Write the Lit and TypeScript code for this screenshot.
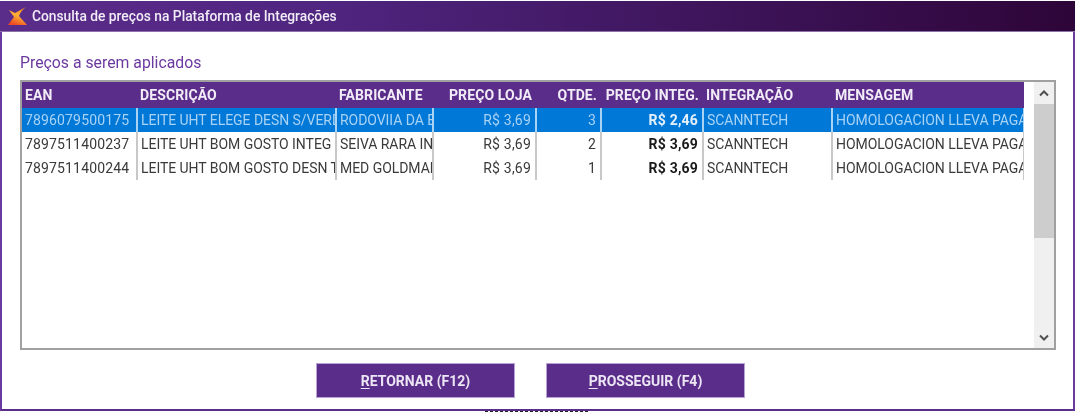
import { LitElement, css, html } from "lit";
import { customElement } from "lit/decorators.js";

const rows = [
  {
    ean: "7896079500175",
    desc: "LEITE UHT ELEGE DESN S/VERDE",
    fab: "RODOVIIA DA BR",
    loja: "R$ 3,69",
    qtd: "3",
    integ: "R$ 2,46",
    selected: true,
  },
  {
    ean: "7897511400237",
    desc: "LEITE UHT BOM GOSTO INTEG SEM",
    fab: "SEIVA RARA IND",
    loja: "R$ 3,69",
    qtd: "2",
    integ: "R$ 3,69",
    selected: false,
  },
  {
    ean: "7897511400244",
    desc: "LEITE UHT BOM GOSTO DESN TP",
    fab: "MED GOLDMAN",
    loja: "R$ 3,69",
    qtd: "1",
    integ: "R$ 3,69",
    selected: false,
  },
];

@customElement("app-root")
export class AppRoot extends LitElement {
  static styles = css`
    :host {
      display: block;
      width: 1076px;
      height: 414px;
      background: #fff;
      font-family: "Roboto", "Liberation Sans", sans-serif;
      overflow: hidden;
    }

    .window {
      box-sizing: border-box;
      width: 1075px;
      height: 410px;
      margin-top: 1px;
      border-left: 2px solid #6b3aa0;
      border-right: 2px solid #6b3aa0;
      border-bottom: 2px solid #5b2d8a;
      display: flex;
      flex-direction: column;
      filter: blur(0.35px);
    }

    .titlebar {
      height: 30px;
      margin: 0 -2px;
      flex: none;
      display: flex;
      align-items: center;
      gap: 5px;
      padding-left: 8px;
      background: linear-gradient(90deg, #5b2d8a 0%, #4f2580 30%, #2e0538 100%);
      border-bottom: 1px solid #8d74a8;
      color: #f1ecf7;
      font-size: 13.8px;
      font-weight: 500;
    }

    .content {
      flex: 1;
      display: flex;
      flex-direction: column;
      padding: 21px 17px 0 18px;
    }

    .section-title {
      color: #6b3aa0;
      font-size: 15.8px;
      line-height: 20px;
      height: 27px;
      flex: none;
    }

    .frame {
      box-sizing: border-box;
      height: 270px;
      flex: none;
      border: 2px solid #a0a0a0;
      display: flex;
    }

    .list {
      flex: 1;
      min-width: 0;
    }

    .row {
      display: grid;
      grid-template-columns: 116px 199px 97px 103px 65px 102px 129px 191px;
      width: 1002px;
      height: 24px;
      font-size: 14px;
      line-height: 25px;
      color: #3a3a3a;
      letter-spacing: -0.05px;
    }

    .row.head {
      height: 26px;
      line-height: 26px;
      background: #5b2d8a;
      color: #f1ecf7;
      font-weight: 700;
      letter-spacing: 0.1px;
    }

    .row.selected {
      background: #0078d7;
      color: #a9d3f5;
    }

    .cell {
      box-sizing: border-box;
      padding: 0 3px;
      white-space: nowrap;
      overflow: hidden;
      border-right: 2px solid #c8c8c8;
    }

    .cell:last-child {
      border-right: 1px solid #c8c8c8;
    }

    .row.selected .cell {
      border-right-color: #a9d3f5;
    }

    .head .cell {
      border: none;
      padding: 0 2px;
    }

    .head .cell:first-child {
      padding-left: 3px;
    }

    .num {
      text-align: right;
    }

    .cell.num {
      padding-right: 4px;
      letter-spacing: 0.2px;
    }

    .head .cell.num {
      padding-right: 5px;
      letter-spacing: 0.1px;
    }

    .digits {
      letter-spacing: 0.15px;
    }

    .strong {
      font-weight: 700;
      color: #1a1a1a;
    }

    .selected .strong {
      color: #e3f1fc;
    }

    .scrollbar {
      width: 20px;
      flex: none;
      display: flex;
      flex-direction: column;
      background: #f0f0f0;
    }

    .arrow {
      height: 22px;
      flex: none;
      display: flex;
      align-items: center;
      justify-content: center;
    }

    .track {
      flex: 1;
    }

    .thumb {
      height: 134px;
      background: #cdcdcd;
    }

    .actions {
      display: flex;
      justify-content: center;
      gap: 31px;
      margin-top: 13px;
      padding-right: 15px;
    }

    .btn {
      box-sizing: border-box;
      width: 199px;
      height: 35px;
      border: 1px solid #b9a3d4;
      background: #5b2d8a;
      color: #ece5f4;
      font: 700 14px "Roboto", "Liberation Sans", sans-serif;
      padding: 0;
    }

    .btn u {
      text-underline-offset: 2px;
    }

    .behind {
      width: 105px;
      height: 1px;
      margin-left: 485px;
      background: repeating-linear-gradient(90deg, #222 0 3px, #fff 3px 5px);
    }
  `;

  render() {
    return html`
      <div class="window">
        <div class="titlebar">
          <svg width="19" height="18" viewBox="0 0 19 18">
            <defs>
              <linearGradient id="logo" x1="0.8" y1="0" x2="0.4" y2="1">
                <stop offset="0" stop-color="#f58a1f" />
                <stop offset="0.5" stop-color="#fbb034" />
                <stop offset="1" stop-color="#ee4a22" />
              </linearGradient>
            </defs>
            <path d="M18 0 C14 3 12 6 11 9 L19 18 L0 18 L6 10 L1 3 L7 6 Z" fill="url(#logo)" />
          </svg>
          <span>Consulta de preços na Plataforma de Integrações</span>
        </div>
        <div class="content">
          <div class="section-title">Preços a serem aplicados</div>
          <div class="frame">
            <div class="list">
              <div class="row head">
                <div class="cell">EAN</div>
                <div class="cell">DESCRIÇÃO</div>
                <div class="cell">FABRICANTE</div>
                <div class="cell num">PREÇO LOJA</div>
                <div class="cell num">QTDE.</div>
                <div class="cell num">PREÇO INTEG.</div>
                <div class="cell">INTEGRAÇÃO</div>
                <div class="cell">MENSAGEM</div>
              </div>
              ${rows.map(
                (row) => html`
                  <div class="row ${row.selected ? "selected" : ""}">
                    <div class="cell digits">${row.ean}</div>
                    <div class="cell">${row.desc}</div>
                    <div class="cell">${row.fab}</div>
                    <div class="cell num">${row.loja}</div>
                    <div class="cell num">${row.qtd}</div>
                    <div class="cell num strong">${row.integ}</div>
                    <div class="cell">SCANNTECH</div>
                    <div class="cell">HOMOLOGACION LLEVA PAGA</div>
                  </div>
                `,
              )}
            </div>
            <div class="scrollbar">
              <div class="arrow">
                <svg width="10" height="7" viewBox="0 0 10 7">
                  <path d="M1 5.5 L5 1.5 L9 5.5" fill="none" stroke="#505050" stroke-width="2" />
                </svg>
              </div>
              <div class="track"><div class="thumb"></div></div>
              <div class="arrow">
                <svg width="10" height="7" viewBox="0 0 10 7">
                  <path d="M1 1.5 L5 5.5 L9 1.5" fill="none" stroke="#505050" stroke-width="2" />
                </svg>
              </div>
            </div>
          </div>
          <div class="actions">
            <button class="btn"><u>R</u>ETORNAR (F12)</button>
            <button class="btn"><u>P</u>ROSSEGUIR (F4)</button>
          </div>
        </div>
      </div>
      <div class="behind"></div>
    `;
  }
}
